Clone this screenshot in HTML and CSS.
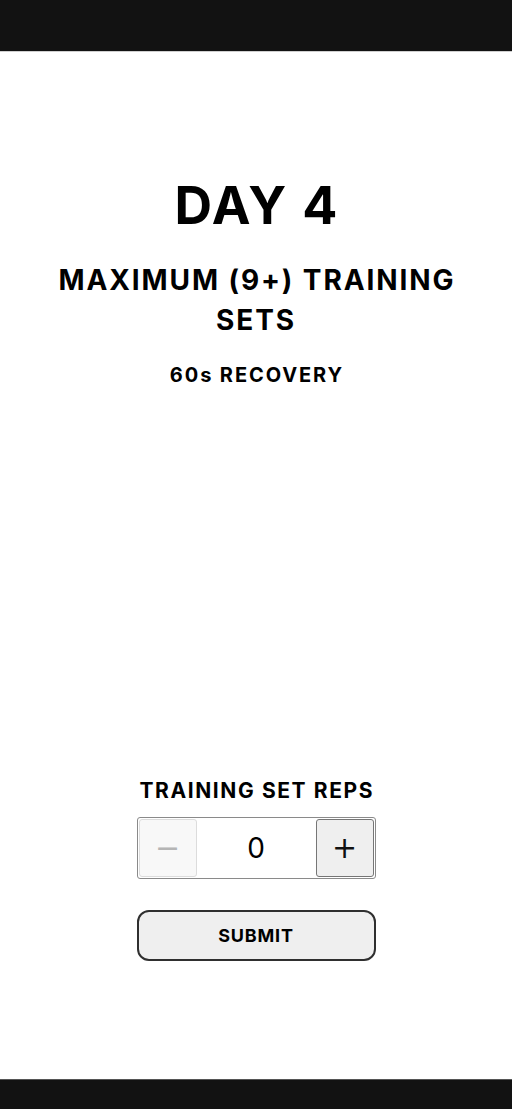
FILE: index.html
```html
<!DOCTYPE html>
<html lang="en">
<head>
<meta charset="utf-8">
<title>Day 4</title>
<link rel="stylesheet" href="styles.css">
</head>
<body>
<div class="app">
  <header class="topbar"></header>
  <main class="screen">
    <section class="intro">
      <h1 class="day">DAY 4</h1>
      <h2 class="plan">MAXIMUM (9+) TRAINING SETS</h2>
      <p class="recovery">60s RECOVERY</p>
    </section>
    <form class="entry">
      <label class="entry-label">TRAINING SET REPS</label>
      <div class="stepper">
        <button type="button" class="step step-minus" disabled>&minus;</button>
        <span class="step-value">0</span>
        <button type="button" class="step step-plus">+</button>
      </div>
      <button type="button" class="submit">SUBMIT</button>
    </form>
  </main>
  <footer class="bottombar"></footer>
</div>
</body>
</html>
```

FILE: styles.css
```css
html, body {
  margin: 0;
  padding: 0;
  background: #ffffff;
}
body {
  font-family: Inter, "Noto Sans", sans-serif;
  color: #000;
}
.app {
  display: flex;
  flex-direction: column;
  height: 1109px;
}
.topbar {
  height: 51px;
  background: #121212;
  border-bottom: 1px solid #cfcfcf;
  flex: none;
}
.bottombar {
  height: 29px;
  background: #121212;
  border-top: 1px solid #555;
  flex: none;
}
.screen {
  flex: 1;
  display: flex;
  flex-direction: column;
  align-items: center;
}
.intro {
  display: flex;
  flex-direction: column;
  align-items: center;
  text-align: center;
  padding: 122px 30px 0;
}
.day {
  margin: 0;
  font-size: 52px;
  font-weight: 700;
  line-height: 64px;
  letter-spacing: 1.8px;
  text-indent: 1.8px;
}
.plan {
  margin: 22px 0 0;
  font-size: 28px;
  font-weight: 700;
  line-height: 40px;
  letter-spacing: 1.9px;
  text-indent: 1.9px;
}
.recovery {
  margin: 21px 0 0;
  font-size: 20px;
  font-weight: 700;
  line-height: 28px;
  letter-spacing: 1.9px;
  text-indent: 1.9px;
}
.entry {
  margin-top: auto;
  margin-bottom: 118px;
  display: flex;
  flex-direction: column;
  align-items: center;
  width: 238px;
}
.entry-label {
  font-size: 21px;
  font-weight: 700;
  line-height: 28px;
  white-space: nowrap;
  letter-spacing: 1.6px;
  text-indent: 1.6px;
}
.stepper {
  margin-top: 12px;
  box-sizing: border-box;
  width: 239px;
  height: 62px;
  border: 1px solid #8a8a8a;
  border-radius: 3px;
  padding: 1px;
  display: flex;
  align-items: center;
}
.step {
  width: 58px;
  height: 58px;
  box-sizing: border-box;
  border-radius: 3px;
  font-family: "DejaVu Sans", sans-serif;
  font-size: 30px;
  line-height: 1;
  padding: 0;
  display: flex;
  align-items: center;
  justify-content: center;
}
.step-minus {
  background: #f8f8f8;
  border: 1px solid #dcdcdc;
  color: #b5b5b5;
}
.step-plus {
  background: #efefef;
  border: 1px solid #767676;
  color: #111;
}
.step-value {
  flex: 1;
  text-align: center;
  font-size: 28px;
  font-weight: 400;
}
.submit {
  margin-top: 31px;
  width: 239px;
  height: 51px;
  box-sizing: border-box;
  border: 2px solid #2f2f2f;
  border-radius: 12px;
  background: #efefef;
  font-family: Inter, "Noto Sans", sans-serif;
  font-size: 18px;
  font-weight: 700;
  letter-spacing: 0.8px;
  color: #000;
}
```
